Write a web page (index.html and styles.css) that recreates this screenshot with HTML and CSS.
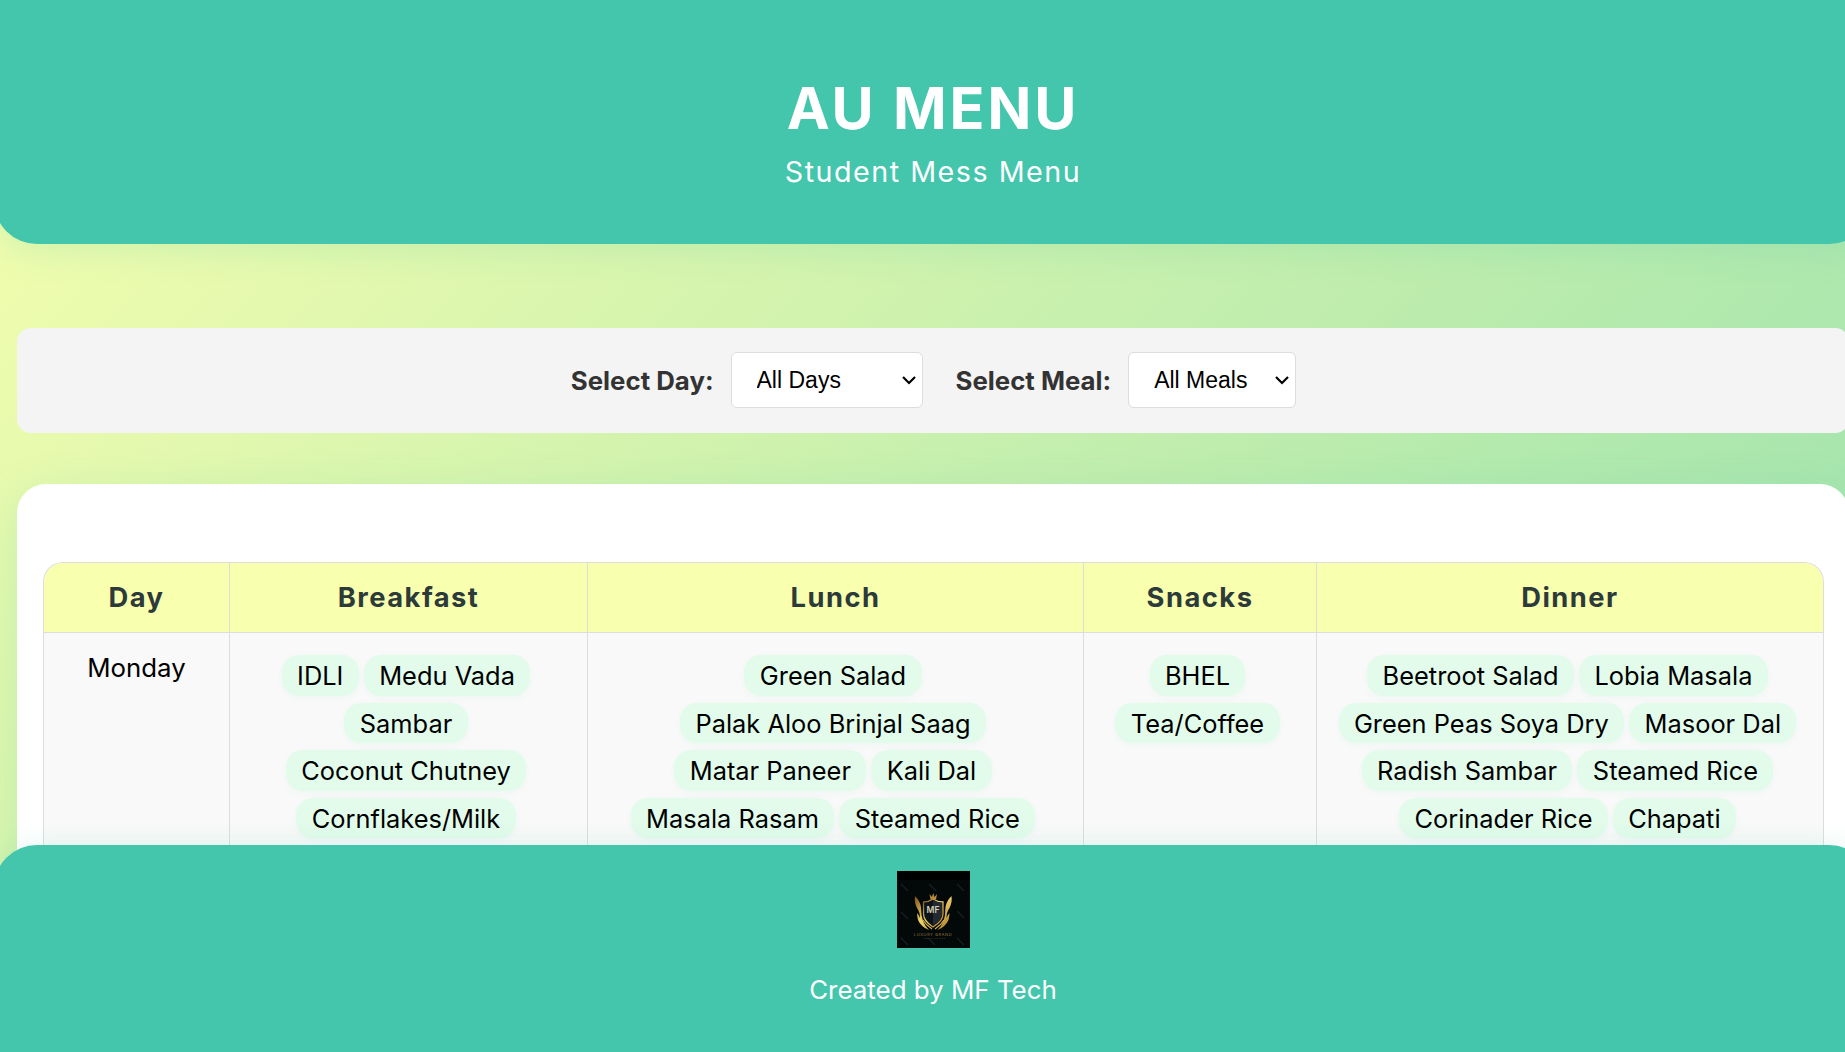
FILE: index.html
```html
<!DOCTYPE html>
<html lang="en">
<head>
<meta charset="utf-8">
<title>AU MENU</title>
<link rel="stylesheet" href="styles.css">
</head>
<body>
<div class="page">
  <header class="header">
    <h1>AU MENU</h1>
    <p>Student Mess Menu</p>
  </header>
  <section class="filters">
    <label for="day">Select Day:</label>
    <div class="select day">
      <select id="day"><option>All Days</option><option>Monday</option></select>
      <svg viewBox="0 0 14 10"><path d="M1 2l6 6 6-6"/></svg>
    </div>
    <label for="meal">Select Meal:</label>
    <div class="select meal">
      <select id="meal"><option>All Meals</option><option>Breakfast</option></select>
      <svg viewBox="0 0 14 10"><path d="M1 2l6 6 6-6"/></svg>
    </div>
  </section>
  <main class="card">
    <div class="menu">
      <div class="th">Day</div>
      <div class="th">Breakfast</div>
      <div class="th">Lunch</div>
      <div class="th">Snacks</div>
      <div class="th">Dinner</div>
      <div class="td name">Monday</div>
      <div class="td">
        <div class="line"><span>IDLI</span><span>Medu Vada</span></div>
        <div class="line"><span>Sambar</span></div>
        <div class="line"><span>Coconut Chutney</span></div>
        <div class="line"><span>Cornflakes/Milk</span></div>
      </div>
      <div class="td">
        <div class="line"><span>Green Salad</span></div>
        <div class="line"><span>Palak Aloo Brinjal Saag</span></div>
        <div class="line"><span>Matar Paneer</span><span>Kali Dal</span></div>
        <div class="line"><span>Masala Rasam</span><span>Steamed Rice</span></div>
      </div>
      <div class="td">
        <div class="line"><span>BHEL</span></div>
        <div class="line"><span>Tea/Coffee</span></div>
      </div>
      <div class="td">
        <div class="line"><span>Beetroot Salad</span><span>Lobia Masala</span></div>
        <div class="line"><span>Green Peas Soya Dry</span><span>Masoor Dal</span></div>
        <div class="line"><span>Radish Sambar</span><span>Steamed Rice</span></div>
        <div class="line"><span>Corinader Rice</span><span>Chapati</span></div>
      </div>
    </div>
  </main>
  <footer class="footer">
    <svg class="logo" viewBox="0 0 73 77">
      <defs>
        <linearGradient id="gold" x1="0" y1="0" x2="1" y2="1">
          <stop offset="0" stop-color="#7a4f14"/><stop offset=".45" stop-color="#f0d470"/><stop offset="1" stop-color="#a8721c"/>
        </linearGradient>
      </defs>
      <rect width="73" height="77" fill="#030809"/>
      <rect width="73" height="9" fill="#000"/>
      <g stroke="#182226" stroke-width="1.2"><path d="M4 13l7 7M32 13l7 7M60 13l7 7M4 41l7 7M60 40l7 7M4 67l7 7M31 67l7 7M60 67l7 7"/></g>
      <path d="M26.500 31q5 0 9.500-3 4.500 3 10 3v12q0 7-10 13-9.500-6-9.500-13z" fill="#0d1419" stroke="url(#gold)" stroke-width="1.300"/>
      <path d="M36 29.500q4 2 9 2.300v11q0 6-9 12z" fill="#232a30"/>
      <path d="M32.500 23l1 5.500h5.500l1-5.500-2.500 3-1.300-4-1.200 4z" fill="#b98b3c"/>
      <path d="M18 25q5 5 6 11 0 8 2 14 2 5 6 9-8-3-11-10-1-4-1-7 2 2 3 5 0-6-3-10-3-6-2-12zM54.500 25q-5 5-6 11 0 8-2 14-2 5-6 9 8-3 11-10 1-4 1-7-2 2-3 5 0-6 3-10 3-6 2-12z" fill="url(#gold)"/>
      <path d="M26 49q3 5 9 9M47 49q-3 5-9 9" fill="none" stroke="#dcb650" stroke-width="1.100"/>
      <text class="initials" x="36" y="42">MF</text>
      <text class="brand" x="36" y="65">LUXURY BRAND</text>
      <path d="M27 67.500h21" stroke="#3a3018" stroke-width=".8" stroke-dasharray="1.500 1"/>
    </svg>
    <p>Created by MF Tech</p>
  </footer>
</div>
</body>
</html>
```
FILE: styles.css
```css
* { box-sizing: border-box; }
html { height: 100%; overflow: hidden; }
body {
  margin: 0;
  height: 100%;
  overflow: hidden;
  font-family: Inter, sans-serif;
  background: linear-gradient(135deg, #f8ffae, #43c6ac) no-repeat 0 0 / 1866px 3350px;
}
h1, p { margin: 0; }
.page {
  width: 1878px;
  height: 1052px;
  margin-left: -6px;
  display: flex;
  flex-direction: column;
  overflow: hidden;
}
.header {
  flex: none;
  height: 244px;
  padding-top: 73px;
  border-radius: 0 0 43px 43px;
  background: #43c6ac;
  box-shadow: 0 6px 34px rgba(67, 198, 172, .18);
  color: #fff;
  text-align: center;
}
.header h1 {
  font-size: 57.6px;
  line-height: 70px;
  font-weight: 700;
  letter-spacing: 2.9px;
}
.header p {
  margin-top: 11px;
  font-size: 28.7px;
  line-height: 36px;
  letter-spacing: 1.5px;
}
.filters {
  flex: none;
  height: 105px;
  margin: 84px 23px 0;
  padding: 0 0 1px 1px;
  display: flex;
  align-items: center;
  justify-content: center;
  border-radius: 14px;
  background: #f4f4f4;
}
.filters label {
  margin-right: 17px;
  font-size: 25.8px;
  font-weight: 700;
  color: #333;
}
.select { position: relative; height: 56px; }
.day { width: 192px; margin-right: 33px; }
.meal { width: 168px; }
.select select {
  width: 100%;
  height: 100%;
  padding: 0 25px;
  appearance: none;
  border: 1px solid #ddd;
  border-radius: 6px;
  background: #fff;
  color: #000;
  font: 23px "Liberation Sans", Arial, sans-serif;
}
.select svg {
  position: absolute;
  right: 7px;
  top: 23px;
  width: 14px;
  height: 10px;
  fill: none;
  stroke: #000;
  stroke-width: 2.2;
}
.card {
  flex: 1;
  min-height: 0;
  margin: 51px 23px 0;
  padding: 78px 25px 0 26px;
  border-radius: 29px 29px 0 0;
  background: #fff;
  box-shadow: 0 11px 45px rgba(67, 198, 172, .18);
}
.menu {
  display: grid;
  grid-template-columns: 186px 358px 496px 233px 1fr;
  grid-template-rows: 70px 1fr;
  height: 420px;
  border: 1px solid #ddd;
  border-bottom: 0;
  border-radius: 20px 20px 0 0;
  overflow: hidden;
  background: #f9f9f9;
}
.th, .td { border-right: 1px solid #ddd; text-align: center; }
.th:nth-child(5n), .td:nth-child(5n) { border-right: 0; }
.th {
  border-bottom: 1px solid #ddd;
  background: #f8ffae;
  color: #2d3a3a;
  font-size: 27.3px;
  line-height: 69px;
  font-weight: 700;
  letter-spacing: 1.5px;
}
.td { padding-top: 22px; font-size: 25.4px; }
.td.name { padding-top: 19px; font-size: 25.8px; line-height: 32px; }
.line {
  display: flex;
  justify-content: center;
  height: 47.6px;
}
.line span {
  height: 40.5px;
  margin-right: 5px;
  padding: 0 15.4px;
  line-height: 42px;
  border-radius: 17px;
  background: #e3fbeb;
  box-shadow: 0 2px 6px rgba(67, 198, 172, .06);
  white-space: nowrap;
}
.footer {
  position: absolute;
  left: -6px;
  top: 845px;
  width: 1878px;
  height: 207px;
  padding-top: 26px;
  display: flex;
  flex-direction: column;
  align-items: center;
  border-radius: 43px 43px 0 0;
  background: #43c6ac;
  box-shadow: 0 -3px 23px rgba(67, 198, 172, .12);
  color: #fff;
}
.logo { display: block; width: 73px; height: 77px; }
.initials { font: 600 8.5px Inter, sans-serif; text-anchor: middle; fill: #d8d0b8; }
.brand { font: 4px Inter, sans-serif; letter-spacing: .6px; text-anchor: middle; fill: #94783a; }
.footer p { margin-top: 26px; font-size: 25.9px; line-height: 32px; }
```
